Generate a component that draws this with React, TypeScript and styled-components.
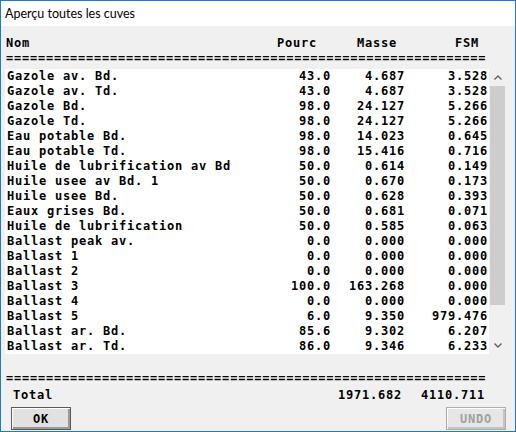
import React from "react";
import styled, { createGlobalStyle } from "styled-components";

const Global = createGlobalStyle`
  html, body { margin: 0; padding: 0; background: #ffffff; }
  * { box-sizing: border-box; }
`;

const MONO = `"DejaVu Sans Mono", "Liberation Mono", monospace`;

const Frame = styled.div`
  width: 516px;
  height: 432px;
  border: 1px solid #1a7ad4;
  background: #f0f0f0;
  display: flex;
  flex-direction: column;
  overflow: hidden;
`;

const TitleBar = styled.div`
  height: 25px;
  flex: none;
  background: #ffffff;
  display: flex;
  align-items: center;
  padding-left: 4px;
  font-family: Lato, "Noto Sans", sans-serif;
  font-size: 12.5px;
  color: #000;
`;

const Body = styled.div`
  flex: 1;
  display: flex;
  flex-direction: column;
  font-family: ${MONO};
  font-weight: bold;
  font-size: 12px;
  letter-spacing: 0.78px;
  line-height: 15px;
  color: #000;
  white-space: pre;
`;

const HeaderRow = styled.div`
  margin-top: 10px;
  padding-left: 5px;
  padding-right: 36px;
  display: grid;
  grid-template-columns: 1fr 80px 80px 82px;
  height: 15px;
`;

const Cell = styled.span<{ $right?: boolean }>`
  text-align: ${(p) => (p.$right ? "right" : "left")};
`;

const Separator = styled.div<{ $gap: number }>`
  margin-top: ${(p) => p.$gap}px;
  padding-left: 5px;
  height: 15px;
`;

const ListArea = styled.div`
  margin-top: 3px;
  margin-left: 4px;
  display: flex;
  height: 285px;
  flex: none;
`;

const List = styled.div`
  width: 484px;
  background: #ffffff;
  display: flex;
  flex-direction: column;
`;

const DataRow = styled.div`
  height: 15px;
  padding-left: 2px;
  padding-right: 1px;
  display: grid;
  grid-template-columns: 1fr 60px 74px 83px;
`;

const Scrollbar = styled.div`
  width: 17px;
  background: #f0f0f0;
  display: flex;
  flex-direction: column;
`;

const ArrowBox = styled.div`
  height: 17px;
  flex: none;
  display: flex;
  align-items: center;
  justify-content: center;
`;

const Track = styled.div`
  flex: 1;
  display: flex;
  flex-direction: column;
`;

const Thumb = styled.div`
  height: 219px;
  margin: 0 1px;
  background: #cdcdcd;
`;

const TotalRow = styled.div`
  margin-top: 2px;
  padding-left: 12px;
  padding-right: 30px;
  display: grid;
  grid-template-columns: 1fr 90px 83px;
  height: 15px;
`;

const ButtonBar = styled.div`
  margin-top: 4px;
  padding: 0 9px 0 10px;
  display: flex;
  justify-content: space-between;
`;

const Button = styled.button<{ $disabled?: boolean }>`
  width: 60px;
  height: 23px;
  padding: 0;
  font-family: ${MONO};
  font-weight: bold;
  font-size: 12px;
  letter-spacing: 0.78px;
  color: ${(p) => (p.$disabled ? "#a0a0a0" : "#000")};
  background: ${(p) => (p.$disabled ? "#e6e6e6" : "#e1e1e1")};
  border: 1px solid ${(p) => (p.$disabled ? "#adadad" : "#5a5a5a")};
  box-shadow: ${(p) =>
    p.$disabled
      ? "inset 1px 1px 0 #ffffff, inset -2px -2px 0 #c4c4c4"
      : "inset 1px 1px 0 #ffffff, inset -2px -2px 0 #9a9a9a"};
  display: flex;
  align-items: center;
  justify-content: center;
`;

const Chevron = ({ down }: { down?: boolean }) => (
  <svg width="8" height="5" viewBox="0 0 8 5">
    <path
      d={down ? "M0.5 0.5 L4 4 L7.5 0.5" : "M0.5 4.5 L4 1 L7.5 4.5"}
      fill="none"
      stroke="#606060"
      strokeWidth="1.4"
    />
  </svg>
);

const rows: [string, string, string, string][] = [
  ["Gazole av. Bd.", "43.0", "4.687", "3.528"],
  ["Gazole av. Td.", "43.0", "4.687", "3.528"],
  ["Gazole Bd.", "98.0", "24.127", "5.266"],
  ["Gazole Td.", "98.0", "24.127", "5.266"],
  ["Eau potable Bd.", "98.0", "14.023", "0.645"],
  ["Eau potable Td.", "98.0", "15.416", "0.716"],
  ["Huile de lubrification av Bd", "50.0", "0.614", "0.149"],
  ["Huile usee av Bd. 1", "50.0", "0.670", "0.173"],
  ["Huile usee Bd.", "50.0", "0.628", "0.393"],
  ["Eaux grises Bd.", "50.0", "0.681", "0.071"],
  ["Huile de lubrification", "50.0", "0.585", "0.063"],
  ["Ballast peak av.", "0.0", "0.000", "0.000"],
  ["Ballast 1", "0.0", "0.000", "0.000"],
  ["Ballast 2", "0.0", "0.000", "0.000"],
  ["Ballast 3", "100.0", "163.268", "0.000"],
  ["Ballast 4", "0.0", "0.000", "0.000"],
  ["Ballast 5", "6.0", "9.350", "979.476"],
  ["Ballast ar. Bd.", "85.6", "9.302", "6.207"],
  ["Ballast ar. Td.", "86.0", "9.346", "6.233"],
];

const EQ = "=".repeat(60);

export default function App() {
  return (
    <>
      <Global />
      <Frame>
        <TitleBar>Aperçu toutes les cuves</TitleBar>
        <Body>
          <HeaderRow>
            <Cell>Nom</Cell>
            <Cell $right>Pourc</Cell>
            <Cell $right>Masse</Cell>
            <Cell $right>FSM</Cell>
          </HeaderRow>
          <Separator $gap={0}>{EQ}</Separator>
          <ListArea>
            <List>
              {rows.map((r, i) => (
                <DataRow key={i}>
                  <Cell>{r[0]}</Cell>
                  <Cell $right>{r[1]}</Cell>
                  <Cell $right>{r[2]}</Cell>
                  <Cell $right>{r[3]}</Cell>
                </DataRow>
              ))}
            </List>
            <Scrollbar>
              <ArrowBox>
                <Chevron />
              </ArrowBox>
              <Track>
                <Thumb />
              </Track>
              <ArrowBox>
                <Chevron down />
              </ArrowBox>
            </Scrollbar>
          </ListArea>
          <Separator $gap={17}>{EQ}</Separator>
          <TotalRow>
            <Cell>Total</Cell>
            <Cell $right>1971.682</Cell>
            <Cell $right>4110.711</Cell>
          </TotalRow>
          <ButtonBar>
            <Button>OK</Button>
            <Button $disabled>UNDO</Button>
          </ButtonBar>
        </Body>
      </Frame>
    </>
  );
}
